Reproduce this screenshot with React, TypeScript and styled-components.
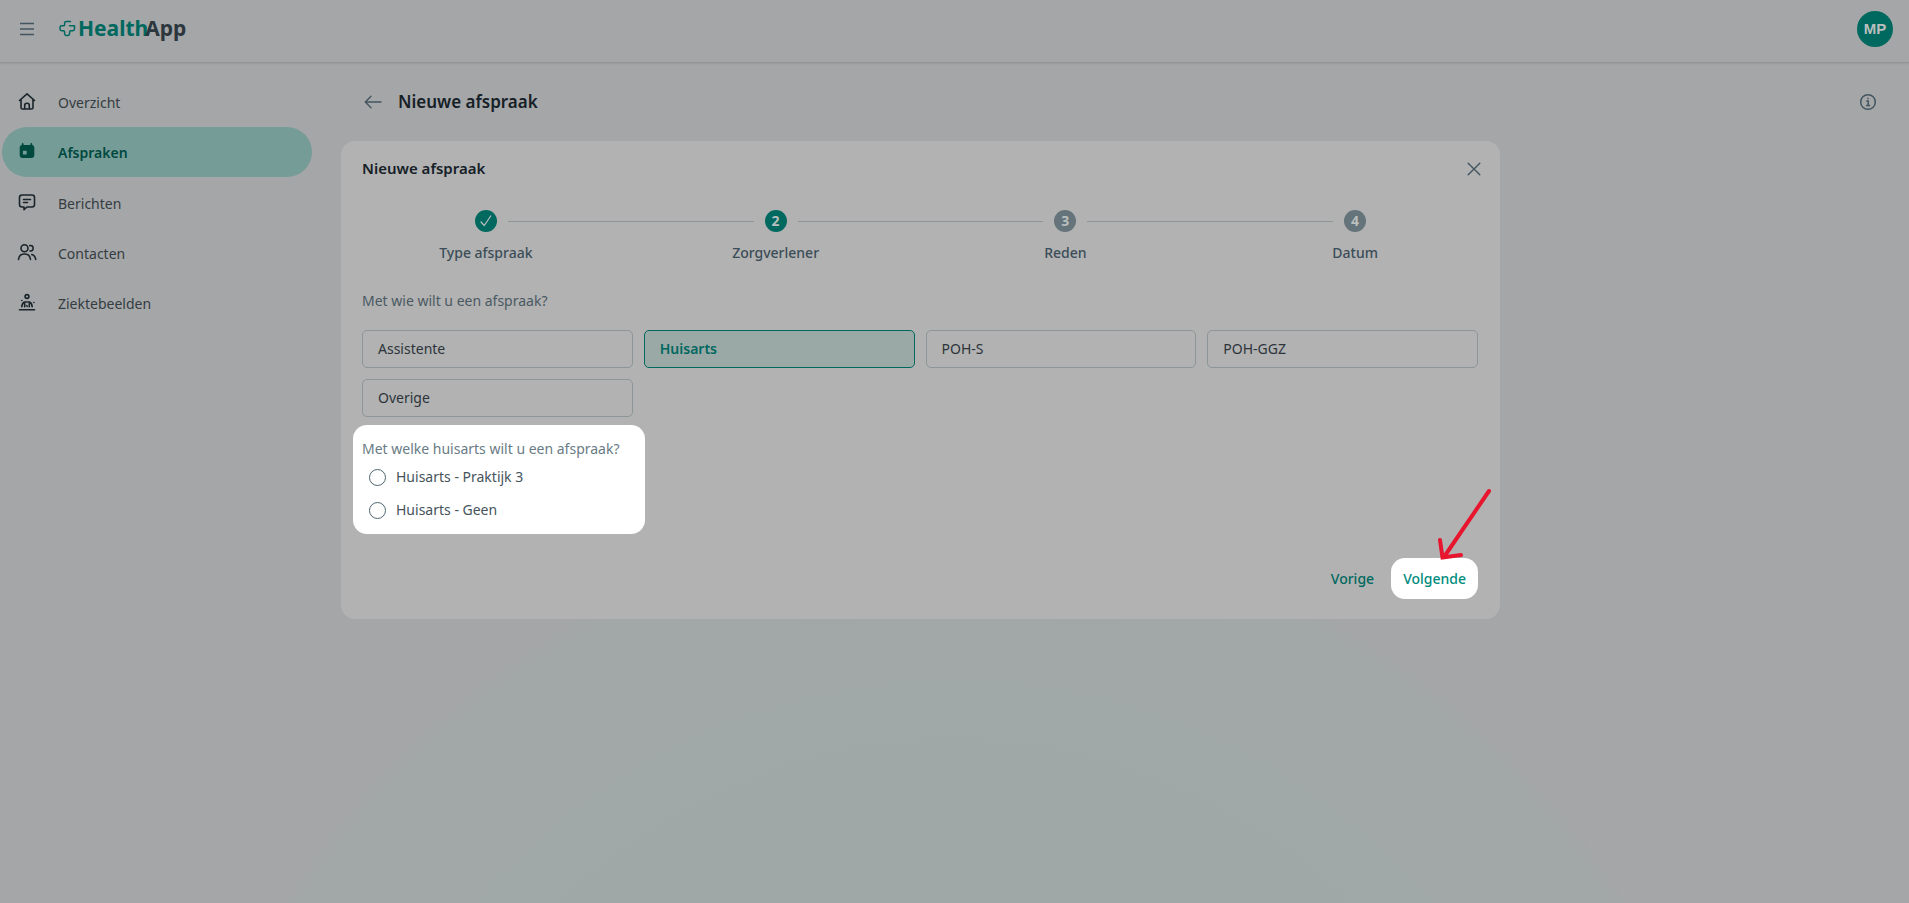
import React from "react";
import styled, { createGlobalStyle, css } from "styled-components";

const color = {
  page: "#a5a6a8",
  card: "#b2b2b2",
  teal: "#00695f",
  tealDark: "#00493f",
  slate: "#435560",
  text: "#343d41",
  border: "#8b9699",
};

const GlobalStyle = createGlobalStyle`
  *, *::before, *::after { box-sizing: border-box; }
  body {
    margin: 0;
    background: ${color.page};
    color: ${color.text};
    font: 400 14px/20px "Noto Sans", "Open Sans", sans-serif;
  }
  button, input { font: inherit; color: inherit; }
`;

const Page = styled.div`
  min-height: 100vh;
  display: flex;
  flex-direction: column;
  background: radial-gradient(circle 790px at 50% 1309px, #9ea8a6 0, #a0a8a7 560px, #a2a7a7 770px, ${color.page} 795px);
`;

const TopBar = styled.header`
  height: 63px;
  padding: 0 16px 4px 15px;
  display: flex;
  align-items: center;
  border-bottom: 1px solid #929496;
  box-shadow: 0 1px 2px rgba(0, 0, 0, 0.08);
  background: ${color.page};
`;

const IconButton = styled.button`
  width: 24px;
  height: 24px;
  padding: 0;
  border: 0;
  background: none;
  color: ${color.slate};
  display: flex;
  align-items: center;
  justify-content: center;
  cursor: pointer;
`;

const Logo = styled.a`
  margin-left: 20px;
  padding-bottom: 2px;
  display: flex;
  align-items: center;
  gap: 2px;
  color: ${color.teal};
  font-size: 21px;
  line-height: 28px;
  font-weight: 700;
  text-decoration: none;
`;

const LogoSuffix = styled.span`
  margin-left: -3px;
  color: #2b363d;
`;

const Avatar = styled.button`
  width: 36px;
  height: 36px;
  margin-left: auto;
  padding: 0;
  border: 0;
  border-radius: 50%;
  background: ${color.teal};
  color: #b9bfbe;
  font: 700 15px/20px "Liberation Sans", sans-serif;
`;

const Body = styled.div`
  flex: 1;
  display: flex;
`;

const Sidebar = styled.nav`
  flex: 0 0 312px;
  padding: 14px 0 0 2px;
`;

const NavItem = styled.a<{ $active?: boolean }>`
  height: 50px;
  padding: 0 12px 0 13px;
  display: flex;
  align-items: center;
  gap: 19px;
  border-radius: 25px;
  color: ${color.text};
  text-decoration: none;
  svg { flex: none; color: #1a252b; }
  ${(p) =>
    p.$active &&
    css`
      margin-bottom: 1px;
      background: #769c98;
      color: ${color.tealDark};
      font-weight: 600;
      svg { color: ${color.tealDark}; }
    `}
`;

const NavLabel = styled.span`
  padding-top: 1px;
`;

const Main = styled.main`
  flex: 1;
  min-width: 0;
  padding: 0 29px;
`;

const PageHead = styled.div`
  height: 78px;
  padding: 0 0 0 20px;
  display: flex;
  align-items: center;
  gap: 13px;
`;

const PageTitle = styled.h1`
  flex: 1;
  margin: 0;
  color: #162027;
  font-size: 17px;
  line-height: 24px;
  font-weight: 600;
`;

const Card = styled.section`
  max-width: 1159px;
  padding-bottom: 20px;
  border-radius: 14px;
  background: ${color.card};
`;

const CardHead = styled.div`
  height: 56px;
  padding: 0 14px 0 21px;
  display: flex;
  align-items: center;
  justify-content: space-between;
`;

const CardTitle = styled.h2`
  margin: 0;
  padding-bottom: 2px;
  color: #162027;
  font-size: 15px;
  line-height: 20px;
  font-weight: 600;
`;

const Steps = styled.ol`
  margin: 13px 0 28px;
  padding: 0;
  display: grid;
  grid-template-columns: repeat(4, 1fr);
  list-style: none;
`;

const Step = styled.li`
  display: flex;
  flex-direction: column;
  gap: 11px;
  color: #3b4d58;
  font-weight: 500;
  text-align: center;
`;

const StepTrack = styled.div`
  display: flex;
  align-items: center;
  gap: 11px;
`;

const StepLine = styled.span<{ $hidden: boolean }>`
  flex: 1;
  height: 1px;
  background: ${(p) => (p.$hidden ? "transparent" : color.border)};
`;

const StepDot = styled.span<{ $done: boolean }>`
  width: 22px;
  height: 22px;
  border-radius: 50%;
  display: flex;
  align-items: center;
  justify-content: center;
  background: ${(p) => (p.$done ? color.teal : "#65737a")};
  color: #b9bfbe;
  font-size: 14px;
  font-weight: 700;
`;

const Question = styled.p`
  margin: 0;
  color: #4a5962;
`;

const ProviderSection = styled.div`
  padding: 0 22px 0 21px;
`;

const Options = styled.div`
  margin-top: 19px;
  display: grid;
  grid-template-columns: repeat(4, 1fr);
  gap: 11px;
`;

const Option = styled.button<{ $selected: boolean }>`
  height: 38px;
  padding: 0 15px;
  border: 1px solid ${(p) => (p.$selected ? color.teal : color.border)};
  border-radius: 5px;
  background: ${(p) => (p.$selected ? "#9aa8a6" : "transparent")};
  color: ${(p) => (p.$selected ? color.teal : "#2c343a")};
  font-weight: ${(p) => (p.$selected ? 600 : 400)};
  text-align: left;
`;

const DoctorChoice = styled.div`
  width: 292px;
  margin: 8px 0 0 12px;
  padding: 14px 9px;
  border-radius: 14px;
  background: #fff;
  color: #46535b;
`;

const DoctorQuestion = styled(Question)`
  color: #697b85;
`;

const Doctors = styled.div`
  margin-top: 8px;
  padding-left: 7px;
  display: flex;
  flex-direction: column;
  gap: 13px;
`;

const Doctor = styled.label`
  display: flex;
  align-items: center;
  gap: 10px;
`;

const Radio = styled.input`
  appearance: none;
  width: 17px;
  height: 17px;
  margin: 0;
  border: 1px solid #4d646f;
  border-radius: 50%;
  background: #fff;
  &:checked { box-shadow: inset 0 0 0 4px #fff; background: #009688; }
`;

const CardFoot = styled.div`
  margin-top: 24px;
  padding-right: 22px;
  display: flex;
  justify-content: flex-end;
  gap: 5px;
`;

const FootButton = styled.button<{ $highlight?: boolean }>`
  height: 41px;
  padding: 0 12px;
  border: 0;
  border-radius: 14px;
  background: ${(p) => (p.$highlight ? "#fff" : "none")};
  color: ${(p) => (p.$highlight ? "#008c7d" : color.teal)};
  font-weight: 500;
`;

const PointerTarget = styled.div`
  position: relative;
`;

const Pointer = styled.svg`
  position: absolute;
  right: -15px;
  bottom: 35px;
  pointer-events: none;
`;

const MenuIcon = () => (
  <svg width="16" height="16" viewBox="0 0 16 16" fill="none" stroke="currentColor" strokeWidth="1.3">
    <path d="M1 2.500h14M1 8h14M1 13.500h14" />
  </svg>
);

const CrossLogo = () => (
  <svg width="17" height="17" viewBox="0 0 17 17" fill="none" stroke="currentColor" strokeWidth="1.5" strokeLinecap="round" strokeLinejoin="round">
    <path d="M11.500 1.500H7.300q-1.700 0-1.700 1.700v1.500q0 1.100-1.100 1.100H2.700Q1 5.800 1 7.500v1.600q0 1.700 1.700 1.700h1.800q1.100 0 1.100 1.100v1.900q0 1.700 1.700 1.700h1.600q1.700 0 1.700-1.700v-1.900q0-1.100 1.100-1.100h2.100q1.700 0 1.700-1.700V5.800h-5" />
  </svg>
);

const HomeIcon = () => (
  <svg width="24" height="24" viewBox="0 0 24 24" fill="none" stroke="currentColor" strokeWidth="1.6" strokeLinecap="round" strokeLinejoin="round">
    <path d="M4.500 10.500 12 3.800l7.500 6.700M6 9.500v8q0 1.500 1.500 1.500h9q1.500 0 1.500-1.500v-8M9.700 19v-3.700q0-2 2.300-2t2.300 2V19" />
  </svg>
);

const CalendarIcon = () => (
  <svg width="24" height="24" viewBox="0 0 24 24" fill="currentColor" fillRule="evenodd">
    <path d="M7.700 3q.9 0 .9.9v1h6.800v-1q0-.9.9-.9t.9.9v1.100q2.100.3 2.100 2.500v7.500q0 3-3 3H7.700q-3 0-3-3V7.500q0-2.200 2.100-2.500V3.900q0-.9.9-.9ZM8.500 10.700q-.6 0-.6.6v2.600q0 .6.600.6h2.600q.6 0 .6-.6v-2.600q0-.6-.6-.6Z" />
  </svg>
);

const MessageIcon = () => (
  <svg width="24" height="24" viewBox="0 0 24 24" fill="none" stroke="currentColor" strokeWidth="1.600" strokeLinecap="round" strokeLinejoin="round">
    <path d="M7 4h10q2.500 0 2.500 2.500v7q0 2.500-2.500 2.500h-5l-3 2.700V16H7q-2.500 0-2.500-2.500v-7Q4.500 4 7 4ZM8.500 8.500h7M8.500 11.500h4" />
  </svg>
);

const PeopleIcon = () => (
  <svg width="24" height="24" viewBox="0 0 24 24" fill="none" stroke="currentColor" strokeWidth="1.600" strokeLinecap="round">
    <circle cx="9.500" cy="7.200" r="3.500" />
    <path d="M3.500 18.500q.5-5.500 6-5.500t6 5.500M14.800 4.600q3.300-.5 3.300 2.600t-3 2.700M16.800 13.600q3.400.9 3.900 4.900" />
  </svg>
);

const ConditionIcon = () => (
  <svg width="24" height="24" viewBox="0 0 24 24" fill="none" stroke="currentColor" strokeWidth="1.600" strokeLinecap="round" strokeLinejoin="round">
    <circle cx="12" cy="5.500" r="1.900" />
    <path d="M4.500 18.700h15M6.800 15.700q.3-3.700 2.700-4.700h5q2.400 1 2.700 4.700M9.700 12.500v3.200M14.300 12.500v3.200M11.700 14.700l.6.600M6.800 9.500h.1M18.800 11.500h.1" />
  </svg>
);

const BackIcon = () => (
  <svg width="18" height="18" viewBox="0 0 18 18" fill="none" stroke="currentColor" strokeWidth="1.400" strokeLinecap="round" strokeLinejoin="round">
    <path d="M17 9H1.500M7 3.300 1.300 9 7 14.700" />
  </svg>
);

const InfoIcon = () => (
  <svg width="18" height="18" viewBox="0 0 18 18" fill="none" stroke="currentColor" strokeWidth="1.500">
    <circle cx="9" cy="9" r="7.300" />
    <path d="M7.300 8h1.900v4.500M7 12.500h4.200M8.300 5.500h1.400" />
  </svg>
);

const CloseIcon = () => (
  <svg width="14" height="14" viewBox="0 0 14 14" fill="none" stroke="currentColor" strokeWidth="1.400" strokeLinecap="round">
    <path d="m1.200 1.200 11.600 11.600M12.800 1.200 1.200 12.800" />
  </svg>
);

const CheckIcon = () => (
  <svg width="12" height="12" viewBox="0 0 12 12" fill="none" stroke="currentColor" strokeWidth="1.200" strokeLinecap="round" strokeLinejoin="round">
    <path d="m1 7 3.300 3.500L10.700 1" />
  </svg>
);

const navigation = [
  { label: "Overzicht", Icon: HomeIcon },
  { label: "Afspraken", Icon: CalendarIcon, active: true },
  { label: "Berichten", Icon: MessageIcon },
  { label: "Contacten", Icon: PeopleIcon },
  { label: "Ziektebeelden", Icon: ConditionIcon },
];

const steps = ["Type afspraak", "Zorgverlener", "Reden", "Datum"];
const currentStep = 1;
const providers = ["Assistente", "Huisarts", "POH-S", "POH-GGZ", "Overige"];
const doctors = ["Huisarts - Praktijk 3", "Huisarts - Geen"];

export default function App() {
  const [provider, setProvider] = React.useState("Huisarts");

  return (
    <Page>
      <GlobalStyle />
      <TopBar>
        <IconButton aria-label="Menu">
          <MenuIcon />
        </IconButton>
        <Logo href="#">
          <CrossLogo />
          <span>
            Health<LogoSuffix>App</LogoSuffix>
          </span>
        </Logo>
        <Avatar>MP</Avatar>
      </TopBar>
      <Body>
        <Sidebar>
          {navigation.map(({ label, Icon, active }) => (
            <NavItem key={label} href="#" $active={active}>
              <Icon />
              <NavLabel>{label}</NavLabel>
            </NavItem>
          ))}
        </Sidebar>
        <Main>
          <PageHead>
            <IconButton aria-label="Terug">
              <BackIcon />
            </IconButton>
            <PageTitle>Nieuwe afspraak</PageTitle>
            <IconButton aria-label="Informatie">
              <InfoIcon />
            </IconButton>
          </PageHead>
          <Card>
            <CardHead>
              <CardTitle>Nieuwe afspraak</CardTitle>
              <IconButton aria-label="Sluiten">
                <CloseIcon />
              </IconButton>
            </CardHead>
            <Steps>
              {steps.map((label, i) => (
                <Step key={label}>
                  <StepTrack>
                    <StepLine $hidden={i === 0} />
                    <StepDot $done={i <= currentStep}>{i < currentStep ? <CheckIcon /> : i + 1}</StepDot>
                    <StepLine $hidden={i === steps.length - 1} />
                  </StepTrack>
                  {label}
                </Step>
              ))}
            </Steps>
            <ProviderSection>
              <Question>Met wie wilt u een afspraak?</Question>
              <Options>
                {providers.map((name) => (
                  <Option
                    key={name}
                    $selected={name === provider}
                    aria-pressed={name === provider}
                    onClick={() => setProvider(name)}
                  >
                    {name}
                  </Option>
                ))}
              </Options>
            </ProviderSection>
            <DoctorChoice role="radiogroup" aria-labelledby="doctor-question">
              <DoctorQuestion id="doctor-question">Met welke huisarts wilt u een afspraak?</DoctorQuestion>
              <Doctors>
                {doctors.map((name) => (
                  <Doctor key={name}>
                    <Radio type="radio" name="doctor" value={name} />
                    {name}
                  </Doctor>
                ))}
              </Doctors>
            </DoctorChoice>
            <CardFoot>
              <FootButton>Vorige</FootButton>
              <PointerTarget>
                <FootButton $highlight>Volgende</FootButton>
                <Pointer width="56" height="78" viewBox="0 0 56 78" fill="none" stroke="#e8152f" strokeWidth="4" strokeLinecap="round" strokeLinejoin="miter">
                  <path d="M52 5 7 71M3 54l2.500 17.500L24 69" />
                </Pointer>
              </PointerTarget>
            </CardFoot>
          </Card>
        </Main>
      </Body>
    </Page>
  );
}
